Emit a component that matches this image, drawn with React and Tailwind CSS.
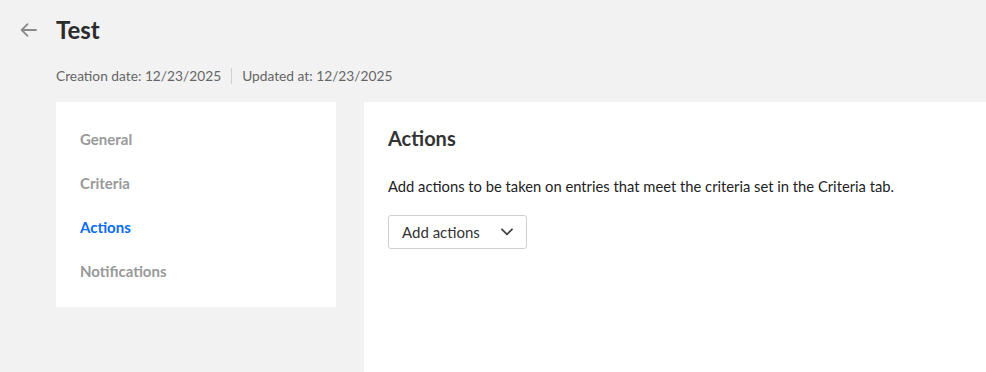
const tabs = ['General', 'Criteria', 'Actions', 'Notifications'];

function BackArrow() {
  return (
    <svg width="17" height="14" viewBox="0 0 17 14" fill="none" stroke="currentColor" strokeWidth="1.8" strokeLinecap="round" strokeLinejoin="round">
      <path d="M16 7H2" />
      <path d="M7.5 1.2L1.7 7l5.8 5.8" />
    </svg>
  );
}

function Chevron() {
  return (
    <svg width="12" height="8" viewBox="0 0 12 8" fill="none" stroke="currentColor" strokeWidth="1.8" strokeLinecap="round" strokeLinejoin="round">
      <path d="M1 1.3l5 5 5-5" />
    </svg>
  );
}

export default function App() {
  const active = 'Actions';

  return (
    <div className="h-[372px] overflow-hidden bg-[#f2f2f2] font-['Lato',sans-serif] text-[#333]">
      <div className="flex items-center pt-[14px] pl-[20px]">
        <button className="w-[17px] h-[22px] flex items-center text-[#8a8a8a]">
          <BackArrow />
        </button>
        <h1 className="ml-[19px] text-[24px] font-bold leading-[32px] text-[#2b2b2b]">Test</h1>
      </div>

      <div className="flex items-center pl-[56px] mt-[20px] text-[13.75px] leading-[20px] text-[#666]">
        <span>Creation date: 12/23/2025</span>
        <span className="mx-[10px] h-[16px] w-px bg-[#d0d0d0]" />
        <span>Updated at: 12/23/2025</span>
      </div>

      <div className="flex items-start gap-[28px] pl-[56px] mt-[16px]">
        <nav className="w-[280px] bg-white pt-[15px] pb-[14px] px-[24px] flex flex-col">
          {tabs.map(t => (
            <div
              key={t}
              className={`h-[44px] flex items-center text-[15px] font-bold ${t === active ? 'text-[#0a6cf5]' : 'text-[#999]'}`}
            >
              {t}
            </div>
          ))}
        </nav>

        <main className="flex-1 h-[300px] bg-white pl-[24px] pt-[22px]">
          <h2 className="text-[20px] font-bold leading-[28px] text-[#333]">Actions</h2>
          <p className="mt-[23px] text-[14.75px] leading-[22px] text-[#222]">
            Add actions to be taken on entries that meet the criteria set in the Criteria tab.
          </p>
          <button className="mt-[18px] w-[139px] h-[34px] flex items-center justify-between pl-[13px] pr-[13px] border border-[#cfcfcf] rounded-[3px] bg-white text-[15px] text-[#333]">
            <span>Add actions</span>
            <span className="text-[#444]"><Chevron /></span>
          </button>
        </main>
      </div>
    </div>
  );
}
